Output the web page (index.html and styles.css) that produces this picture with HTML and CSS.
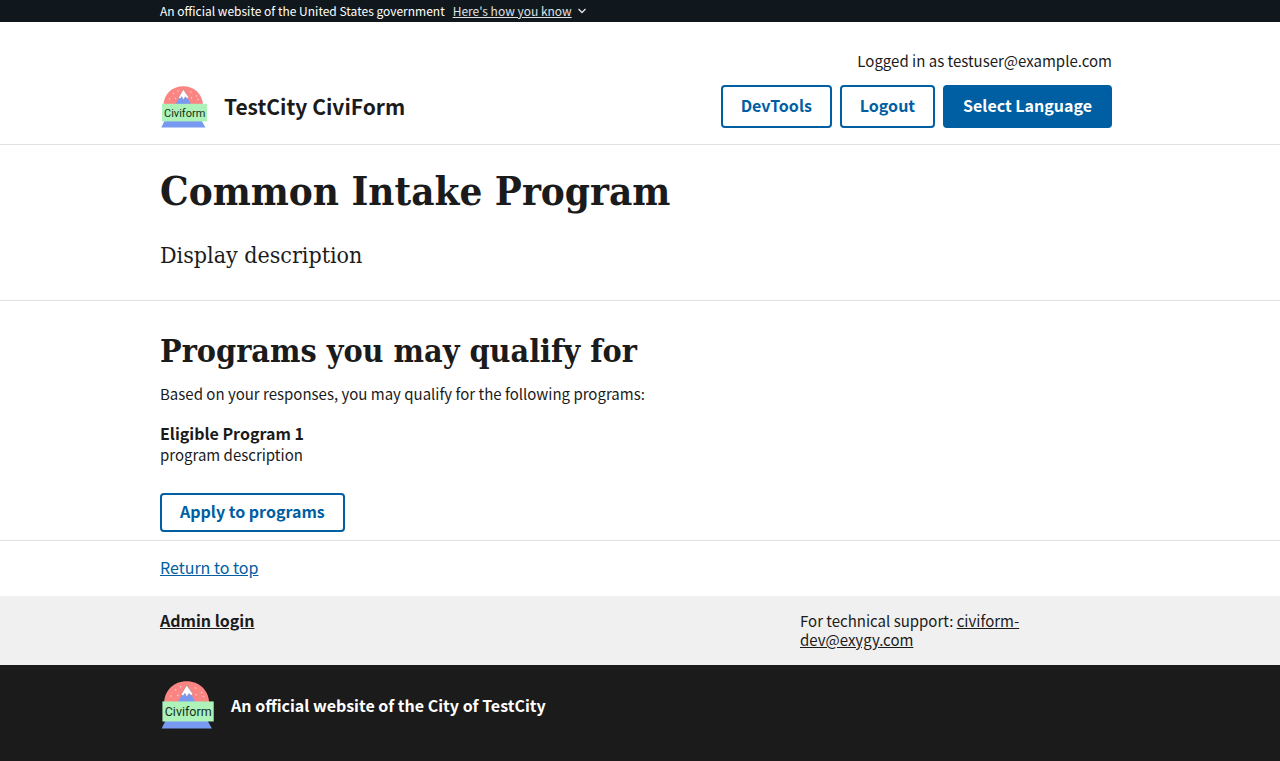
FILE: index.html
```html
<!DOCTYPE html>
<html lang="en">
<head>
<meta charset="utf-8">
<meta name="viewport" content="width=device-width, initial-scale=1">
<title>Common Intake Program</title>
<link rel="stylesheet" href="styles.css">
</head>
<body>
<section class="gov-banner" aria-label="Official government website">
  <div class="container gov-banner-row">
    <span>An official website of the United States government</span>
    <button type="button" class="gov-banner-button"><span class="gov-banner-label">Here's how you know</span><svg class="chevron" viewBox="0 0 10 10" aria-hidden="true"><path d="M1.500 3 5 6.500 8.500 3" fill="none" stroke="currentColor" stroke-width="1.400"/></svg></button>
  </div>
</section>

<header class="site-header">
  <div class="container site-header-row">
    <div class="brand">
      <svg class="brand-logo" viewBox="0 0 48 43" role="img" aria-label="Civiform logo">
        <path d="M3.400 20C4 9 12 1.200 23.200 1.200S42.500 9 43 20z" fill="#fa8583"/>
        <path d="M15.500 19.500 23.300 5 31 19.500z" fill="#7799f1"/>
        <path d="M23.300 4.500 18.300 13l1.900.8 1.600-2.200 1.500 3.400 1.900-3.200 2.100 1.900 1.300-1.700z" fill="#fff" stroke="#8b7894" stroke-width=".4"/>
        <g fill="#fdd3d1">
          <circle cx="13.500" cy="8.500" r=".7"/><circle cx="18" cy="6" r=".7"/><circle cx="9.500" cy="14" r=".7"/>
          <circle cx="15.500" cy="13.500" r=".7"/><circle cx="31" cy="7" r=".7"/><circle cx="36.500" cy="11" r=".7"/>
          <circle cx="31.500" cy="13" r=".7"/><circle cx="38" cy="14.500" r=".7"/>
        </g>
        <path d="M4.500 36h37.300l3.600 6.500H1.300z" fill="#7799f1"/>
        <rect x="2" y="18.800" width="45" height="17.600" fill="#adf2b9"/>
        <text x="4" y="32" class="logo-text">Civiform</text>
      </svg>
      <span class="brand-name">TestCity CiviForm</span>
    </div>
    <div class="account">
      <span>Logged in as testuser@example.com</span>
      <nav class="account-actions">
        <button type="button" class="button">DevTools</button>
        <button type="button" class="button">Logout</button>
        <button type="button" class="button button-solid">Select Language</button>
      </nav>
    </div>
  </div>
</header>

<main>
  <section class="intro">
    <div class="container">
      <h1>Common Intake Program</h1>
      <p class="lead">Display description</p>
    </div>
  </section>
  <section class="results">
    <div class="container">
      <h2>Programs you may qualify for</h2>
      <p class="results-note">Based on your responses, you may qualify for the following programs:</p>
      <h3>Eligible Program 1</h3>
      <p class="program-text">program description</p>
      <button type="button" class="button button-short">Apply to programs</button>
    </div>
  </section>
</main>

<footer>
  <div class="container return-row"><a class="return-link" href="#">Return to top</a></div>
  <div class="support">
    <div class="container support-row">
      <a class="admin-link" href="#">Admin login</a>
      <p class="contact">For technical support: <a href="mailto:civiform-dev@exygy.com">civiform-dev@exygy.com</a></p>
    </div>
  </div>
  <div class="identity">
    <div class="container identity-row">
      <svg class="identity-logo" viewBox="0 0 48 43" role="img" aria-label="Civiform logo">
        <path d="M3.400 20C4 9 12 1.200 23.200 1.200S42.500 9 43 20z" fill="#fa8583"/>
        <path d="M15.500 19.500 23.300 5 31 19.500z" fill="#7799f1"/>
        <path d="M23.300 4.500 18.300 13l1.900.8 1.600-2.200 1.500 3.400 1.900-3.200 2.100 1.900 1.300-1.700z" fill="#fff" stroke="#8b7894" stroke-width=".4"/>
        <g fill="#fdd3d1">
          <circle cx="13.500" cy="8.500" r=".7"/><circle cx="18" cy="6" r=".7"/><circle cx="9.500" cy="14" r=".7"/>
          <circle cx="15.500" cy="13.500" r=".7"/><circle cx="31" cy="7" r=".7"/><circle cx="36.500" cy="11" r=".7"/>
          <circle cx="31.500" cy="13" r=".7"/><circle cx="38" cy="14.500" r=".7"/>
        </g>
        <path d="M4.500 36h37.300l3.600 6.500H1.300z" fill="#7799f1"/>
        <rect x="2" y="18.800" width="45" height="17.600" fill="#adf2b9"/>
        <text x="4" y="32" class="logo-text">Civiform</text>
      </svg>
      <span>An official website of the City of TestCity</span>
    </div>
  </div>
</footer>
</body>
</html>
```
FILE: styles.css
```css
* {
  box-sizing: border-box;
}

body {
  margin: 0;
  background: #fff;
  color: #1b1b1b;
  font-family: "Noto Sans CJK SC", "Open Sans", sans-serif;
  font-size: 15px;
  line-height: 20px;
}

h1, h2, h3, p {
  margin: 0;
}

button {
  font: inherit;
  cursor: pointer;
}

a {
  color: inherit;
}

.logo-text {
  font: 11px Roboto, sans-serif;
  fill: #14301c;
}

.container {
  max-width: 1024px;
  margin: 0 auto;
  padding: 0 32px;
}

.gov-banner {
  background: #11181d;
  color: #fff;
  font-size: 12px;
  line-height: 22px;
}

.gov-banner-row {
  display: flex;
  gap: 8px;
}

.gov-banner-button {
  display: flex;
  align-items: center;
  gap: 5px;
  padding: 0;
  border: 0;
  background: none;
  color: #dfe1e2;
}

.gov-banner-label {
  text-decoration: underline;
}

.chevron {
  width: 10px;
  height: 10px;
}

.site-header {
  border-bottom: 1px solid #dfe1e2;
}

.site-header-row {
  display: flex;
  justify-content: space-between;
  align-items: flex-end;
  padding-top: 29px;
  padding-right: 40px;
  padding-bottom: 16px;
}

.brand {
  display: flex;
  align-items: center;
  gap: 16px;
}

.brand-logo {
  width: 48px;
  height: 43px;
}

.brand-name {
  padding-bottom: 2px;
  font-size: 21px;
  font-weight: 700;
}

.account {
  display: flex;
  flex-direction: column;
  align-items: flex-end;
  gap: 14px;
}

.account-actions {
  display: flex;
  gap: 8px;
}

.button {
  padding: 8px 18px 11px;
  border: 2px solid #005ea2;
  border-radius: 4px;
  background: #fff;
  color: #005ea2;
  font-size: 16px;
  font-weight: 700;
}

.button-solid {
  background: #005ea2;
  color: #fff;
}

.button-short {
  padding-top: 6px;
  padding-bottom: 9px;
}

.intro {
  padding: 20px 0 30px;
  border-bottom: 1px solid #dfe1e2;
}

h1, h2, .lead {
  font-family: "DejaVu Serif Condensed", "DejaVu Serif", serif;
}

h1 {
  font-size: 40px;
  line-height: 52px;
}

.lead {
  margin-top: 24px;
  font-size: 23px;
  line-height: 29px;
}

.results {
  padding: 30px 0 8px;
  border-bottom: 1px solid #dfe1e2;
}

h2 {
  font-size: 32px;
  line-height: 40px;
}

.results-note {
  margin-top: 13px;
}

h3 {
  margin-top: 19px;
  font-size: 16px;
  line-height: 20px;
}

.program-text {
  margin-top: 2px;
  margin-bottom: 28px;
}

.return-row {
  display: flex;
  padding-top: 16px;
  padding-bottom: 19px;
}

.return-link {
  color: #005ea2;
  font-size: 16px;
}

.support {
  padding: 15px 0 16px;
  background: #f0f0f0;
  line-height: 19px;
}

.support-row {
  display: grid;
  grid-template-columns: 2fr 1fr;
  align-items: start;
}

.admin-link {
  font-size: 16px;
  font-weight: 700;
}

.contact {
  padding-right: 64px;
}

.identity {
  padding: 15px 0 32px;
  background: #1b1b1b;
  color: #fff;
  font-size: 16px;
  font-weight: 700;
}

.identity-row {
  display: flex;
  align-items: center;
  gap: 16px;
}

.identity-logo {
  width: 55px;
  height: 49px;
}
```
